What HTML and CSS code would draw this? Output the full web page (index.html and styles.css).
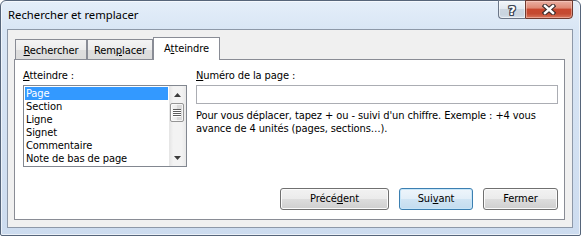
FILE: index.html
```html
<!DOCTYPE html>
<html lang="fr">
<head>
<meta charset="utf-8">
<title>Rechercher et remplacer</title>
<link rel="stylesheet" href="styles.css">
</head>
<body>
<div class="window">
  <div class="titlebar">
    <span class="title">Rechercher et remplacer</span>
    <div class="caption">
      <div class="cbtn help"><span class="qmark">?</span></div>
      <div class="cbtn close">
        <svg width="14" height="11" viewBox="0 0 14 11">
          <path d="M3 2 L11 9 M11 2 L3 9" stroke="#3b2d2d" stroke-width="4.6" stroke-linecap="square" fill="none"/>
          <path d="M3 2 L11 9 M11 2 L3 9" stroke="#ffffff" stroke-width="2.4" stroke-linecap="square" fill="none"/>
        </svg>
      </div>
    </div>
  </div>
  <div class="client">
    <div class="tabs">
      <div class="tab t1"><u>R</u>echercher</div>
      <div class="tab t2">Rem<u>p</u>lacer</div>
      <div class="tab active">A<u>t</u>teindre</div>
    </div>
    <div class="panel">
      <div class="panel-top">
        <div class="col-left">
          <div class="label"><u>A</u>tteindre :</div>
          <div class="listbox">
            <ul class="items">
              <li class="sel">Page</li>
              <li>Section</li>
              <li>Ligne</li>
              <li>Signet</li>
              <li>Commentaire</li>
              <li>Note de bas de page</li>
            </ul>
            <div class="scrollbar">
              <div class="arrow">
                <svg width="7" height="4" viewBox="0 0 7 4"><polygon points="0,4 7,4 3.5,0" fill="#3c3c3c"/></svg>
              </div>
              <div class="thumb">
                <svg width="8" height="8" viewBox="0 0 8 8">
                  <path d="M0 0.5 H8 M0 2.5 H8 M0 4.5 H8 M0 6.5 H8" stroke="#5c5c5c" stroke-width="1"/>
                  <path d="M0 1.5 H8 M0 3.5 H8 M0 5.5 H8 M0 7.5 H8" stroke="#ffffff" stroke-width="1"/>
                </svg>
              </div>
              <div class="track"></div>
              <div class="arrow">
                <svg width="7" height="4" viewBox="0 0 7 4"><polygon points="0,0 7,0 3.5,4" fill="#3c3c3c"/></svg>
              </div>
            </div>
          </div>
        </div>
        <div class="col-right">
          <div class="label"><u>N</u>uméro de la page :</div>
          <div class="textbox"></div>
          <p class="hint">Pour vous déplacer, tapez + ou - suivi d'un chiffre. Exemple : +4 vous avance de 4&nbsp;unités (pages, sections…).</p>
        </div>
      </div>
      <div class="buttons">
        <div class="btn b-prev">Précé<u>d</u>ent</div>
        <div class="btn b-next default">Sui<u>v</u>ant</div>
        <div class="btn b-close">Fermer</div>
      </div>
    </div>
  </div>
</div>
</body>
</html>
```
FILE: styles.css
```css
html, body {
  margin: 0;
  padding: 0;
  background: #ffffff;
}

body {
  font-family: "DejaVu Sans Condensed", "DejaVu Sans", sans-serif;
  font-size: 11px;
  letter-spacing: -0.1px;
  color: #000;
}

u {
  text-decoration: underline;
  text-underline-offset: 1px;
  text-decoration-thickness: 1px;
}

.window {
  width: 581px;
  height: 236px;
  box-sizing: border-box;
  border: 1px solid #56657a;
  border-radius: 6px 6px 2px 2px;
  background: linear-gradient(#e4eef9 0px, #d9e6f5 28px, #cddcef 100%);
  box-shadow: inset 0 0 0 1px rgba(255, 255, 255, 0.6);
  padding: 0 7px 7px 6px;
  display: flex;
  flex-direction: column;
}

.titlebar {
  height: 28px;
  display: flex;
  flex-shrink: 0;
}

.title {
  font-family: "Noto Sans", "Open Sans", sans-serif;
  font-size: 11.3px;
  letter-spacing: 0;
  line-height: 28px;
  padding-left: 1px;
  color: #000;
}

.caption {
  margin-left: auto;
  margin-top: -1px;
  display: flex;
  align-self: flex-start;
  height: 19px;
}

.cbtn {
  box-sizing: border-box;
  height: 19px;
  border: 1px solid #6b7688;
  display: flex;
  align-items: center;
  justify-content: center;
}

.help {
  width: 27px;
  border-right: none;
  border-radius: 0 0 0 4px;
  background: linear-gradient(#f2f6fa 0%, #e2e9f1 45%, #ccd6e1 50%, #c9d4df 80%, #d7e0ea 100%);
  box-shadow: inset 0 0 0 1px rgba(255, 255, 255, 0.5);
}

.qmark {
  font-family: "DejaVu Sans", sans-serif;
  font-weight: bold;
  font-size: 13px;
  line-height: 13px;
  letter-spacing: 0;
  color: #fff;
  text-shadow: 1px 0 0 #3c4654, -1px 0 0 #3c4654, 0 1px 0 #3c4654, 0 -1px 0 #3c4654,
    1px 1px 0 #3c4654, -1px -1px 0 #3c4654, 1px -1px 0 #3c4654, -1px 1px 0 #3c4654;
  margin-top: 1px;
}

.close {
  width: 48px;
  border-color: #6e3a30;
  border-radius: 0 0 4px 0;
  background: linear-gradient(#eab0a3 0%, #df8a76 40%, #c8482f 50%, #c44a31 75%, #d9785e 100%);
  box-shadow: inset 0 0 0 1px rgba(255, 220, 210, 0.45);
}

.client {
  flex: 1;
  border: 1px solid #8d98a8;
  background: #f0f0f0;
  padding: 7px 7px 7px 6px;
  display: flex;
  flex-direction: column;
  min-height: 0;
}

.tabs {
  display: flex;
  align-items: flex-end;
  height: 22px;
  padding-left: 1px;
  flex-shrink: 0;
}

.tab {
  box-sizing: border-box;
  height: 20px;
  border: 1px solid #898c95;
  border-bottom: none;
  background: linear-gradient(#f4f4f4 0%, #ececec 50%, #dedede 51%, #dcdcdc 100%);
  padding-top: 4px;
  line-height: 13px;
  text-align: center;
  white-space: nowrap;
}

.t1 { width: 72px; }
.t2 { width: 66px; }

.tab.active {
  width: 67px;
  height: 23px;
  margin-bottom: -1px;
  background: #ffffff;
  position: relative;
  z-index: 1;
}

.panel {
  flex: 1;
  background: #ffffff;
  border: 1px solid #898c95;
  padding: 9px 6px 9px 8px;
  display: flex;
  flex-direction: column;
}

.panel-top {
  display: flex;
  gap: 9px;
}

.col-left {
  width: 164px;
  display: flex;
  flex-direction: column;
  gap: 3px;
}

.col-right {
  flex: 1;
  display: flex;
  flex-direction: column;
  gap: 3px;
}

.label {
  line-height: 13px;
  white-space: nowrap;
}

.listbox {
  box-sizing: border-box;
  height: 82px;
  border: 1px solid #828790;
  background: #fff;
  display: flex;
}

.items {
  list-style: none;
  margin: 0;
  padding: 1px;
  flex: 1;
}

.items li {
  height: 13px;
  line-height: 13px;
  padding-left: 1px;
  white-space: nowrap;
}

.items li.sel {
  background: #3399ff;
  color: #fff;
}

.scrollbar {
  width: 17px;
  display: flex;
  flex-direction: column;
  background: linear-gradient(to right, #e4e4e4 0%, #f3f3f3 25%, #f3f3f3 75%, #e9e9e9 100%);
}

.arrow {
  height: 17px;
  display: flex;
  align-items: center;
  justify-content: center;
  flex-shrink: 0;
}

.thumb {
  box-sizing: border-box;
  height: 19px;
  margin: 0 2px 0 1px;
  border: 1px solid #959595;
  border-radius: 2px;
  background: linear-gradient(to right, #f5f5f5 0%, #eaeaea 50%, #d9d9d9 51%, #dcdcdc 100%);
  box-shadow: inset 0 0 0 1px rgba(255, 255, 255, 0.7);
  display: flex;
  align-items: center;
  justify-content: center;
  flex-shrink: 0;
}

.track {
  flex: 1;
}

.textbox {
  box-sizing: border-box;
  height: 19px;
  border: 1px solid #abadb3;
  background: #fff;
}

.hint {
  margin: 2px 0 0;
  line-height: 13px;
}

.buttons {
  margin-top: auto;
  display: flex;
  justify-content: flex-end;
  gap: 10px;
}

.btn {
  box-sizing: border-box;
  height: 22px;
  line-height: 20px;
  border: 1px solid #707070;
  border-radius: 3px;
  background: linear-gradient(#f2f2f2 0%, #ebebeb 50%, #dddddd 51%, #cfcfcf 100%);
  box-shadow: inset 0 0 0 1px #fbfbfb;
  text-align: center;
  white-space: nowrap;
}

.b-prev { width: 109px; }
.b-next { width: 74px; }
.b-close { width: 75px; }

.btn.default {
  border-color: #3c7fb1;
  background: linear-gradient(#eef5fb 0%, #e2eef8 50%, #d0e4f3 51%, #c3dcef 100%);
  box-shadow: inset 0 0 0 1px #c7e6f9;
}
```
